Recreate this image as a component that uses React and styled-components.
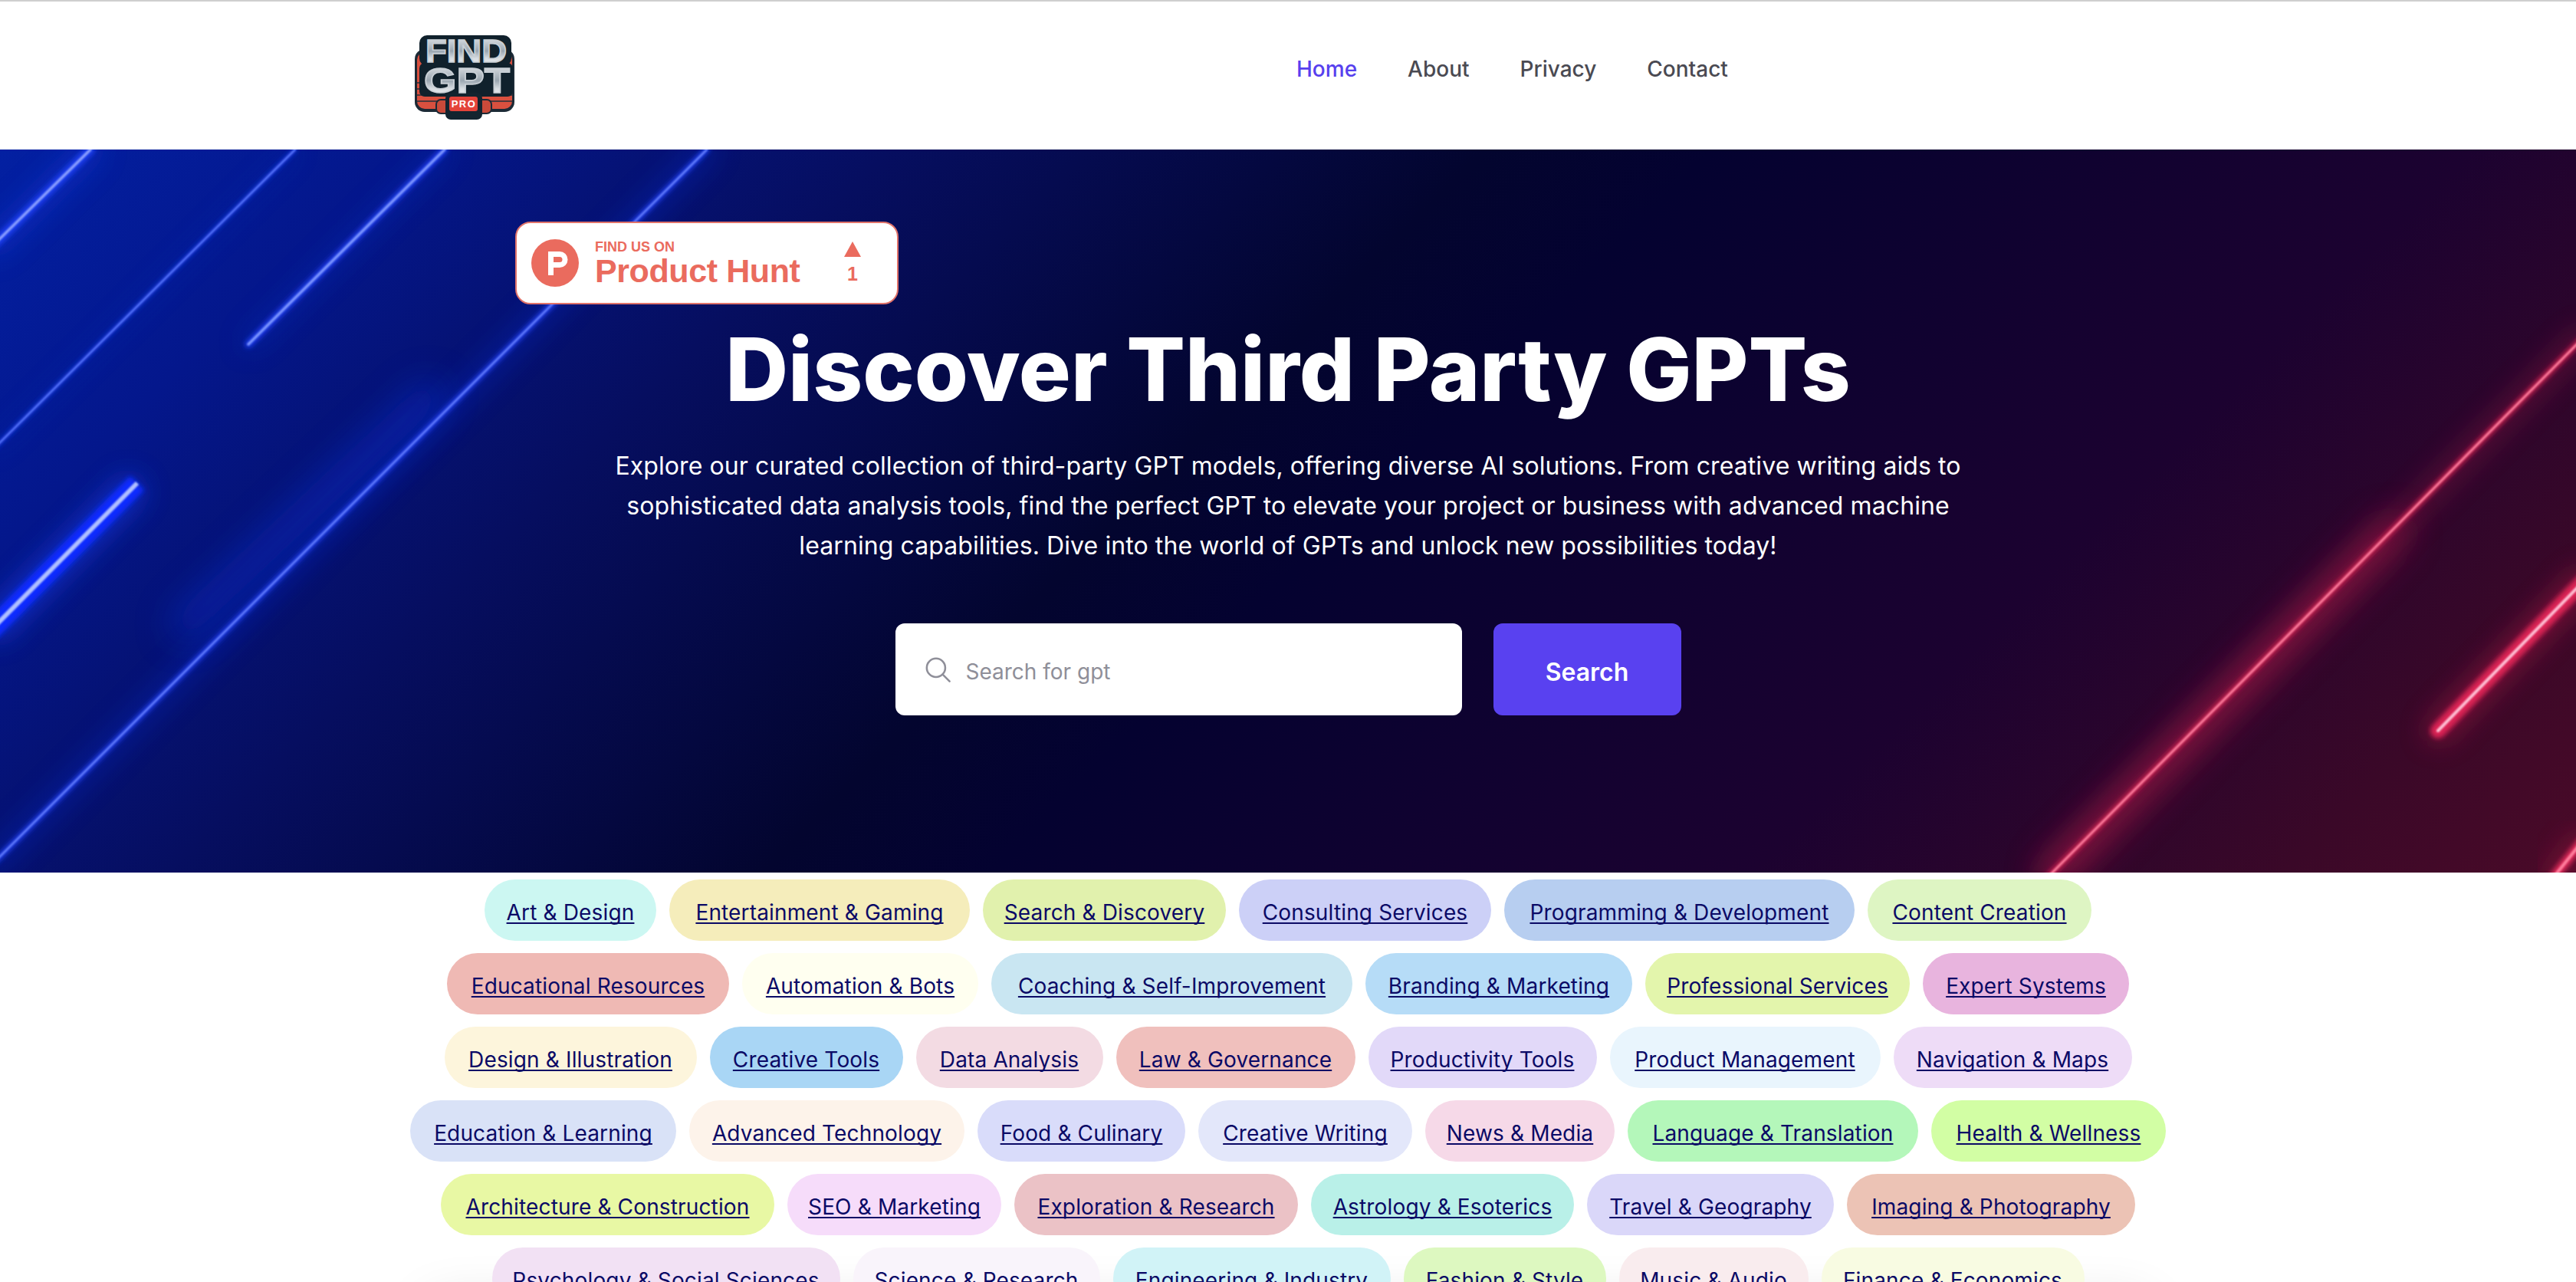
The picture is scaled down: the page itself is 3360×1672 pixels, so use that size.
import React from "react";
import styled, { createGlobalStyle } from "styled-components";

const Global = createGlobalStyle`
  html, body { margin: 0; padding: 0; background: #fff; }
  body { height: 1672px; overflow: hidden; font-family: Inter, "Noto Sans", sans-serif; }
  * { box-sizing: border-box; }
`;

const Page = styled.div`
  position: relative;
  height: 1672px;
  overflow: hidden;
  border-top: 2px solid #cfcfcf;
`;

const Header = styled.header`
  height: 193px;
  background: #fff;
  display: flex;
  align-items: center;
  padding: 0 0 18px 541px;
`;

const Logo = styled.svg`
  width: 130px;
  height: 110px;
  flex: none;
  margin-top: 22px;
`;

const Nav = styled.nav`
  display: flex;
  align-items: center;
  gap: 66px;
  margin-left: 1020px;
`;

const NavLink = styled.a`
  font-size: 28px;
  font-weight: 500;
  color: ${(p) => (p.$active ? "#5740ee" : "#4a4a52")};
  text-decoration: none;
`;

const Hero = styled.section`
  position: relative;
  height: 943px;
  overflow: hidden;
  background: linear-gradient(
    135deg,
    #0320a2 0%,
    #04178c 12%,
    #060e60 27%,
    #03052f 45%,
    #040230 52%,
    #0c0230 60%,
    #1c0230 75%,
    #3a0828 91%,
    #4a0a28 100%
  );
  display: flex;
  flex-direction: column;
  align-items: center;
`;

const Beams = styled.svg`
  position: absolute;
  left: 0;
  top: 0;
  width: 3360px;
  height: 943px;
`;

const HeroInner = styled.div`
  position: relative;
  width: 2016px;
  padding-top: 94px;
  display: flex;
  flex-direction: column;
  align-items: center;
`;

const Badge = styled.a`
  align-self: flex-start;
  width: 500px;
  height: 108px;
  background: #fff;
  border: 2px solid #e0736a;
  border-radius: 20px;
  color: #ea6b5e;
  display: flex;
  align-items: center;
  padding: 0 0 0 19px;
  font-family: "Liberation Sans", Arial, sans-serif;
  font-weight: 700;
`;

const BadgeText = styled.div`
  display: flex;
  flex-direction: column;
  margin-left: 21px;
  width: 287px;
`;

const BadgeSmall = styled.span`
  font-size: 18px;
  line-height: 20px;
`;

const BadgeBig = styled.span`
  font-size: 43px;
  line-height: 42px;
  letter-spacing: -0.4px;
`;

const BadgeVote = styled.div`
  margin-left: 37px;
  display: flex;
  flex-direction: column;
  align-items: center;
  width: 24px;
  font-size: 25px;
  line-height: 28px;
  gap: 8px;
`;

const Title = styled.h1`
  margin: 12px 0 0;
  font-size: 113.4px;
  line-height: 145px;
  font-weight: 800;
  color: #fff;
  text-align: center;
  white-space: nowrap;
`;

const Lead = styled.p`
  margin: 28px 0 0;
  color: #fff;
  font-size: 32px;
  line-height: 52px;
  letter-spacing: 0.09px;
  text-align: center;
  white-space: nowrap;
`;

const SearchRow = styled.form`
  margin-top: 75px;
  display: flex;
  gap: 41px;
`;

const SearchField = styled.div`
  width: 739px;
  height: 120px;
  border-radius: 12px;
  background: #fff;
  display: flex;
  align-items: center;
  padding-left: 38px;
  gap: 20px;
  color: #8f8f99;
  font-size: 28px;
`;

const SearchHint = styled.span`
  padding-top: 6px;
`;

const SearchButton = styled.button`
  width: 245px;
  height: 120px;
  border: 0;
  border-radius: 12px;
  background: #5941f0;
  color: #fff;
  font-family: inherit;
  font-size: 32px;
  font-weight: 600;
  padding: 6px 0 0;
`;

const Pills = styled.section`
  position: relative;
  padding-top: 9px;
  display: flex;
  flex-direction: column;
  align-items: center;
  gap: 16px;
`;

const PillRow = styled.div`
  display: flex;
  justify-content: center;
  gap: 17px;
`;

const Pill = styled.a`
  width: ${(p) => p.$w}px;
  height: 80px;
  flex: none;
  padding-top: 6px;
  border-radius: 40px;
  background: ${(p) => p.$bg};
  display: flex;
  align-items: center;
  justify-content: center;
  white-space: nowrap;
  color: #0b0a66;
  font-size: 28px;
  letter-spacing: 0.15px;
  text-decoration: underline;
  text-underline-offset: 3px;
  text-decoration-thickness: 2px;
  text-decoration-skip-ink: none;
`;

const FoldShadow = styled.div`
  position: absolute;
  left: 560px;
  right: 560px;
  top: 1700px;
  height: 200px;
  background: #fff;
  box-shadow: 0 0 70px rgba(0, 0, 0, 0.14);
`;

const rows = [
  [["Art & Design", "#ccf7f2", 224], ["Entertainment & Gaming", "#f5edbb", 392], ["Search & Discovery", "#e1f1ad", 317], ["Consulting Services", "#ccd0f7", 329], ["Programming & Development", "#b7cef0", 457], ["Content Creation", "#def5c3", 292]],
  [["Educational Resources", "#efb9b4", 368], ["Automation & Bots", "#fffff0", 308], ["Coaching & Self-Improvement", "#c9e6f2", 471], ["Branding & Marketing", "#b6dcf7", 348], ["Professional Services", "#e3f5ac", 345], ["Expert Systems", "#e8b4de", 269]],
  [["Design & Illustration", "#fdf5dc", 329], ["Creative Tools", "#a9d6f5", 252], ["Data Analysis", "#f3dbe3", 244], ["Law & Governance", "#f0c0bd", 312], ["Productivity Tools", "#e2d9f9", 298], ["Product Management", "#e9f5fd", 353], ["Navigation & Maps", "#eedcf7", 311]],
  [["Education & Learning", "#d9e2f7", 347], ["Advanced Technology", "#fdf3ea", 359], ["Food & Culinary", "#d9dcfa", 271], ["Creative Writing", "#e3e7fa", 279], ["News & Media", "#f6d9e8", 247], ["Language & Translation", "#b4f7ba", 379], ["Health & Wellness", "#d2fea4", 306]],
  [["Architecture & Construction", "#e8f8a4", 435], ["SEO & Marketing", "#f6dcfa", 279], ["Exploration & Research", "#ebc2c6", 370], ["Astrology & Esoterics", "#b9f0e8", 343], ["Travel & Geography", "#dad7f9", 322], ["Imaging & Photography", "#ecc3b5", 376]],
  [["Psychology & Social Sciences", "#f2e1f4", 454], ["Science & Research", "#f9f4fb", 322], ["Engineering & Industry", "#d1f3f7", 362], ["Fashion & Style", "#ddf8c0", 264], ["Music & Audio", "#f9ecee", 247], ["Finance & Economics", "#f8fbe2", 343]],
];

const Beam = ({ x1, y1, x2, y2, mid, core, glow, glowW, midW, w, cap = "round", op = 0.55 }) => (
  <g strokeLinecap={cap}>
    <line x1={x1} y1={y1} x2={x2} y2={y2} stroke={glow} strokeWidth={glowW} opacity={op} filter="url(#soft)" />
    <line x1={x1} y1={y1} x2={x2} y2={y2} stroke={mid} strokeWidth={midW} filter="url(#tiny)" />
    <line x1={x1} y1={y1} x2={x2} y2={y2} stroke={core} strokeWidth={w} filter="url(#hair)" />
  </g>
);

export default function App() {
  return (
    <Page>
      <Global />
      <Header>
        <Logo viewBox="0 0 130 110">
          <defs>
            <linearGradient id="chrome" x1="0" y1="0" x2="0" y2="1">
              <stop offset="0" stopColor="#f2f4f6" />
              <stop offset="0.5" stopColor="#9aa6b0" />
              <stop offset="0.7" stopColor="#d6dce1" />
              <stop offset="1" stopColor="#f4f6f7" />
            </linearGradient>
          </defs>
          <rect x="0" y="18" width="130" height="82" rx="13" fill="#1c2a36" />
          <rect x="3" y="22" width="124" height="74" rx="10" fill="#d9503f" />
          <path d="M3 62h124M3 70h124M3 78h124M3 86h124" stroke="#23303b" strokeWidth="1.6" />
          <rect x="6" y="0" width="120" height="40" rx="10" fill="#10212c" />
          <rect x="6" y="36" width="122" height="44" rx="7" fill="#10212c" />
          <rect x="28" y="84" width="72" height="18" rx="6" fill="#c94a3a" stroke="#1c2a36" strokeWidth="2" />
          <rect x="40" y="75" width="48" height="35" rx="7" fill="#13242f" />
          <rect x="45" y="80" width="37" height="19" rx="3" fill="#e4433a" />
          <text x="67" y="35" textAnchor="middle" fontFamily="Liberation Sans" fontWeight="700" fontSize="42" fill="url(#chrome)" stroke="#c9d0d6" strokeWidth="1.6" textLength="106" lengthAdjust="spacingAndGlyphs">FIND</text>
          <text x="68" y="75" textAnchor="middle" fontFamily="Liberation Sans" fontWeight="700" fontSize="46" fill="url(#chrome)" stroke="#c9d0d6" strokeWidth="1.6" textLength="112" lengthAdjust="spacingAndGlyphs">GPT</text>
          <text x="64" y="94" textAnchor="middle" fontFamily="Liberation Sans" fontWeight="700" fontSize="13" letterSpacing="1.5" fill="#fff">PRO</text>
        </Logo>
        <Nav>
          <NavLink $active>Home</NavLink>
          <NavLink>About</NavLink>
          <NavLink>Privacy</NavLink>
          <NavLink>Contact</NavLink>
        </Nav>
      </Header>
      <Hero>
        <Beams viewBox="0 0 3360 943">
          <defs>
            <filter id="soft" x="-50%" y="-50%" width="200%" height="200%"><feGaussianBlur stdDeviation="18" /></filter>
            <filter id="wide" x="-50%" y="-50%" width="200%" height="200%"><feGaussianBlur stdDeviation="24" /></filter>
            <filter id="tiny" x="-50%" y="-50%" width="200%" height="200%"><feGaussianBlur stdDeviation="3" /></filter>
            <filter id="hair" x="-50%" y="-50%" width="200%" height="200%"><feGaussianBlur stdDeviation="0.8" /></filter>
          </defs>
          <line x1={560} y1={320} x2={240} y2={620} stroke="#0c32e0" strokeWidth={36} strokeLinecap="round" opacity={0.5} filter="url(#wide)" />
          <line x1={3120} y1={500} x2={2680} y2={945} stroke="#b01c48" strokeWidth={40} strokeLinecap="round" opacity={0.55} filter="url(#wide)" />
          <Beam x1={118} y1={0} x2={-10} y2={126} mid="#1a3cf0" core="#8fa3ff" glow="#1437e0" glowW={26} midW={12} w={3.5} />
          <Beam x1={385} y1={0} x2={-10} y2={392} mid="#1538e0" core="#5c78ff" glow="#1437e0" glowW={8} midW={5} w={2.5} op={0.3} />
          <Beam x1={580} y1={0} x2={324} y2={254} mid="#1a3cf0" core="#8098ff" glow="#1437e0" glowW={12} midW={9} w={3.5} />
          <Beam x1={922} y1={0} x2={-10} y2={932} mid="#1a3cf0" core="#6a84ff" glow="#0e2cd8" glowW={24} midW={7} w={2.5} op={0.4} />
          <Beam x1={179} y1={435} x2={-15} y2={630} mid="#0a2cff" core="#b0c0ff" glow="#1a3cf0" glowW={34} midW={26} w={6} cap="butt" op={0.7} />
          <Beam x1={3370} y1={245} x2={2670} y2={950} mid="#c41f50" core="#ff7f9e" glow="#b01c48" glowW={24} midW={8} w={3} op={0.4} />
          <Beam x1={3370} y1={563} x2={3180} y2={758} mid="#dc2454" core="#ffc0d4" glow="#c01c48" glowW={30} midW={20} w={4} />
          <Beam x1={3370} y1={900} x2={3330} y2={950} mid="#e02a5a" core="#ff7f9e" glow="#c01c48" glowW={20} midW={12} w={4} />
        </Beams>
        <HeroInner>
          <Badge>
            <svg width="62" height="62" viewBox="0 0 62 62">
              <circle cx="31" cy="31" r="31" fill="#ea6b5e" />
              <path d="M22 47V16h15a10.5 10.5 0 0 1 0 21h-8v10z M29 23v7h8a3.5 3.5 0 0 0 0-7z" fill="#fff" fillRule="evenodd" />
            </svg>
            <BadgeText>
              <BadgeSmall>FIND US ON</BadgeSmall>
              <BadgeBig>Product Hunt</BadgeBig>
            </BadgeText>
            <BadgeVote>
              <svg width="22" height="20" viewBox="0 0 22 20"><path d="M11 0l11 20H0z" fill="#ea6b5e" /></svg>
              <span>1</span>
            </BadgeVote>
          </Badge>
          <Title>Discover Third Party GPTs</Title>
          <Lead>
            Explore our curated collection of third-party GPT models, offering diverse AI solutions. From creative writing aids to<br />
            sophisticated data analysis tools, find the perfect GPT to elevate your project or business with advanced machine<br />
            learning capabilities. Dive into the world of GPTs and unlock new possibilities today!
          </Lead>
          <SearchRow>
            <SearchField>
              <svg width="34" height="34" viewBox="0 0 24 24" fill="none" stroke="#8f8f99" strokeWidth="1.8" strokeLinecap="round"><circle cx="10.5" cy="10.5" r="8.5" /><path d="M17 17l6 6" /></svg>
              <SearchHint>Search for gpt</SearchHint>
            </SearchField>
            <SearchButton type="button">Search</SearchButton>
          </SearchRow>
        </HeroInner>
      </Hero>
      <FoldShadow />
      <Pills>
        {rows.map((row, i) => (
          <PillRow key={i}>
            {row.map(([t, c, w]) => (
              <Pill key={t} $bg={c} $w={w}>{t}</Pill>
            ))}
          </PillRow>
        ))}
      </Pills>
    </Page>
  );
}
